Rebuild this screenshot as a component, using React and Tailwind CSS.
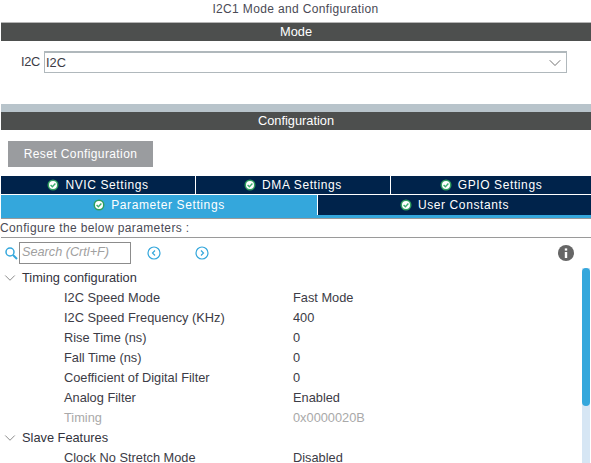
import { ChevronDown } from "lucide-react";

const timingRows = [
  ["I2C Speed Mode", "Fast Mode"],
  ["I2C Speed Frequency (KHz)", "400"],
  ["Rise Time (ns)", "0"],
  ["Fall Time (ns)", "0"],
  ["Coefficient of Digital Filter", "0"],
  ["Analog Filter", "Enabled"],
  ["Timing", "0x0000020B", true],
];

function Check() {
  return (
    <svg width="12" height="12" viewBox="0 0 12 12" className="shrink-0">
      <circle cx="6" cy="6" r="5.5" fill="#2f9e5f" />
      <circle cx="6" cy="6" r="4" fill="#fff" />
      <path d="M3.6 6l1.8 1.8 3-3.2" fill="none" stroke="#3cae6e" strokeWidth="1.4" />
    </svg>
  );
}

function Bar({ children }) {
  return (
    <div className="ml-px h-[18px] bg-[#4d4f4e] text-center text-[12.8px] leading-[18px] text-white">
      {children}
    </div>
  );
}

function Tab({ label, className }) {
  return (
    <div className={`flex items-center justify-center gap-[6px] text-xs tracking-[0.6px] text-white ${className}`}>
      <Check />
      {label}
    </div>
  );
}

function Row({ name, value, off }) {
  return (
    <div className={`flex h-5 items-center pt-px text-[12.8px] leading-[11px] ${off ? "text-[#a9a9a9]" : "text-[#3c3c46]"}`}>
      <span className="ml-[64px] w-[229px]">{name}</span>
      <span>{value}</span>
    </div>
  );
}

function Group({ label }) {
  return (
    <div className="flex h-5 items-center pt-px text-[12.8px] text-[#33333d]">
      <ChevronDown size={18} strokeWidth={1} className="mx-[1px] text-[#666]" />
      <span className="ml-[2px]">{label}</span>
    </div>
  );
}

export default function App() {
  return (
    <div className="relative h-[463px] w-[591px] overflow-hidden bg-white font-['Liberation_Sans',Arial,sans-serif]">
      <div className="h-[22px] pt-[2px] text-center text-xs leading-[15px] tracking-[0.35px] text-[#4a4a55]">
        I2C1 Mode and Configuration
      </div>
      <div className="ml-px h-px bg-[#b5b5b5]" />
      <Bar>Mode</Bar>

      <div className="mt-[10px] flex h-[22px] items-center">
        <span className="ml-[21px] w-[23px] text-[12.8px] tracking-[-0.3px] text-[#3c3c46]">I2C</span>
        <div className="flex h-[22px] w-[523px] items-center justify-between border border-[#b0b8bc] border-t-2 pl-[1px] text-[12.8px] text-[#3c3c46]">
          I2C
          <ChevronDown size={20} strokeWidth={1} className="mr-px text-[#555]" />
        </div>
      </div>

      <div className="ml-px mt-[31px] h-2 bg-[#b8c4cb]" />
      <Bar>Configuration</Bar>

      <button className="ml-2 mt-[11px] block h-[26px] w-[145px] bg-[#9a9c9f] text-xs tracking-[0.4px] text-white">
        Reset Configuration
      </button>

      <div className="ml-px mt-[9px] flex h-[18px] bg-[#00234b]">
        <Tab label="NVIC Settings" className="w-[195px] border-r border-white" />
        <Tab label="DMA Settings" className="w-[195px] border-r border-white" />
        <Tab label="GPIO Settings" className="flex-1" />
      </div>
      <div className="ml-px mt-px flex h-[23px] bg-[#34a7dc]">
        <Tab label="Parameter Settings" className="h-5 w-[316px]" />
        <Tab label="User Constants" className="h-5 flex-1 border-l border-white bg-[#00234b]" />
      </div>
      <div className="ml-px h-px bg-[#9a9a9a]" />

      <div className="h-[18px] pt-[2px] text-xs leading-[15px] tracking-[0.38px] text-[#4a4a55]">
        Configure the below parameters :
      </div>
      <div className="ml-px h-px bg-[#9a9a9a]" />

      <div className="relative mt-[4px] flex h-[22px] items-center">
        <svg width="14" height="14" viewBox="0 0 14 14" className="ml-[4px]">
          <circle cx="6" cy="6" r="4" fill="none" stroke="#34a7dc" strokeWidth="1.5" />
          <path d="M9 9l4 4" stroke="#34a7dc" strokeWidth="2" />
        </svg>
        <div className="ml-px flex h-[22px] w-[112px] items-center border border-[#8c8c8c] pl-[2px] text-[12.7px] italic text-[#a0a0a0]">
          Search (Crtl+F)
        </div>
        <svg width="14" height="14" viewBox="0 0 14 14" className="ml-[16px]">
          <circle cx="7" cy="7" r="6" fill="none" stroke="#34a7dc" strokeWidth="1.2" />
          <path d="M8 4.5L5.5 7 8 9.5" fill="none" stroke="#34a7dc" strokeWidth="1.2" />
        </svg>
        <svg width="14" height="14" viewBox="0 0 14 14" className="ml-[34px]">
          <circle cx="7" cy="7" r="6" fill="none" stroke="#34a7dc" strokeWidth="1.2" />
          <path d="M6 4.5L8.5 7 6 9.5" fill="none" stroke="#34a7dc" strokeWidth="1.2" />
        </svg>
        <svg width="16" height="16" viewBox="0 0 16 16" className="absolute left-[558px] top-[3px]">
          <circle cx="8" cy="8" r="8" fill="#666" />
          <rect x="6.8" y="7" width="2.4" height="6" fill="#fff" />
          <rect x="6.8" y="3.4" width="2.4" height="2.2" fill="#fff" />
        </svg>
      </div>

      <div className="mt-[3px]">
        <Group label="Timing configuration" />
        {timingRows.map(([n, v, off]) => (
          <Row key={n} name={n} value={v} off={off} />
        ))}
        <Group label="Slave Features" />
        <Row name="Clock No Stretch Mode" value="Disabled" />
      </div>

      {/* scrollbar */}
      <div className="absolute left-[582px] top-[268px] h-[195px] w-2 bg-[#d6e6f4]">
        <div className="h-[138px] rounded-[4px] bg-[#34a7dc]" />
      </div>
    </div>
  );
}
